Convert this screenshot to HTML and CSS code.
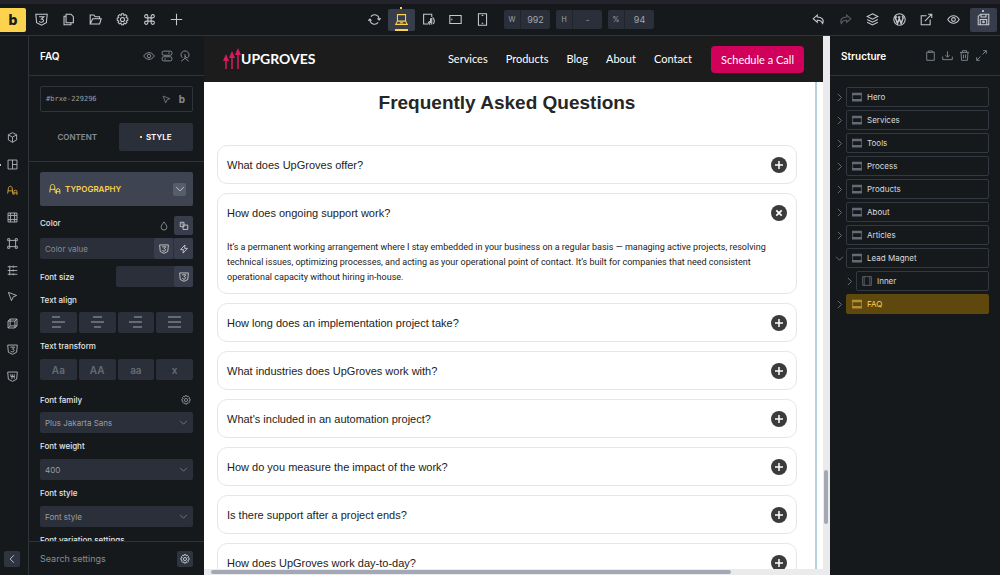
FILE: index.html
```html
<!DOCTYPE html>
<html lang="en">
<head>
  <meta charset="UTF-8">
  <title>Builder - FAQ</title>
  <meta name="viewport" content="width=device-width, initial-scale=1.0">
  <link rel="stylesheet" href="styles.css">
</head>
<body>
  <!-- Shared icons -->
  <svg class="sprite" aria-hidden="true">
    <symbol id="i-css" viewBox="0 0 16 16"><path d="M1 1.500h14l-1 10.500-6 3-6-3zM5 4.500h6L8 7.500c3.500 0 3 4 0 4-1.500 0-2.300-.5-2.700-1.500"/></symbol>
    <symbol id="i-css4" viewBox="0 0 16 16"><path d="M1 1.500h14l-1 10.500-6 3-6-3zM5.500 4.500V8h5M8 5l-1 6.500M10.500 5v6"/></symbol>
    <symbol id="i-pages" viewBox="0 0 16 16"><path d="M5 1.500h6l3 3V12H5zM5 4H2.500v10.500H11V12"/></symbol>
    <symbol id="i-folder" viewBox="0 0 16 16"><path d="M1.500 13.500v-11H6l1.500 2h5.500V7M1.500 13.500L4.500 7H15l-2 6.500z"/></symbol>
    <symbol id="i-gear" viewBox="0 0 16 16"><path d="M6.700 1h2.600l.5 2 1.800-1 1.900 1.900-1 1.800 2 .6v2.900l-2 .6 1 1.800-1.900 1.900-1.800-1-.5 2H6.700l-.5-2-1.800 1-1.900-1.900 1-1.800-2-.6V6.300l2-.6-1-1.800L4.400 2l1.800 1z"/><circle cx="8" cy="8" r="2.500"/></symbol>
    <symbol id="i-cmd" viewBox="0 0 16 16"><path d="M6 6h4v4H6zM6 6H4a2 2 0 1 1 2-2zM10 6V4a2 2 0 1 1 2 2zM10 10h2a2 2 0 1 1-2 2zM6 10v2a2 2 0 1 1-2-2z"/></symbol>
    <symbol id="i-plus" viewBox="0 0 16 16"><path d="M8 1v14M1 8h14"/></symbol>
    <symbol id="i-reload" viewBox="0 0 16 16"><path d="M3.500 4.500A5.700 5.700 0 0 1 13.700 8M12.500 11.500A5.700 5.700 0 0 1 2.300 8M.3 9.500L2.300 7.500l2 2M11.700 6.500l2 2 2-2"/></symbol>
    <symbol id="i-laptop" viewBox="0 0 16 16"><path d="M3 2h10v8H3zM3 10l-2 4h14l-2-4M6 12h4"/></symbol>
    <symbol id="i-tablet" viewBox="0 0 16 16"><path d="M12 5V1.500H2v12h6M10 14.500l-2-3 1-.8 1.500 1V7.500c0-1 1.500-1 1.500 0V14M13 5.500c2 1.500 2.500 5 1 8"/></symbol>
    <symbol id="i-wide" viewBox="0 0 16 16"><path d="M1 3h14v10H1zM3.500 7v2"/></symbol>
    <symbol id="i-phone" viewBox="0 0 16 16"><path d="M3 1h10v14H3zM7 12.500h2M7 3h2"/></symbol>
    <symbol id="i-undo" viewBox="0 0 16 16"><path d="M6.500 2.500L1.500 7l5 4.500V9c4-.3 5.500 1 6.500 4 2.500-4.500-1-8-6.500-8z"/></symbol>
    <symbol id="i-layers" viewBox="0 0 16 16"><path d="M8 1l6.500 3.300L8 7.600 1.500 4.300zM1.500 8L8 11.300 14.500 8M1.500 11.500L8 14.800l6.500-3.300"/></symbol>
    <symbol id="i-wp" viewBox="0 0 16 16"><circle cx="8" cy="8" r="7"/><path stroke-width="1.800" d="M2.500 5l3 8 2.300-6.500M7 5l3 8 2.500-7-1-2.500M2.500 5h2.500M6 5h3"/></symbol>
    <symbol id="i-open" viewBox="0 0 16 16"><path d="M8 3.500H1.500v11h11V8M6 10l8.500-8.500M10 1.500h4.500V6"/></symbol>
    <symbol id="i-eye" viewBox="0 0 16 16"><path d="M1 8c3.500-6 10.500-6 14 0-3.500 6-10.500 6-14 0z"/><circle cx="8" cy="8" r="2.300"/></symbol>
    <symbol id="i-save" viewBox="0 0 16 16"><path d="M1.500 14.500V4l3-2.500h10v13zM5 1.500V5h6V1.500M4 14V8h8v6"/><circle cx="8" cy="11" r="1"/></symbol>
    <symbol id="i-toggles" viewBox="0 0 16 16"><rect x="1.500" y="1.500" width="13" height="5.500" rx="2"/><rect x="1.500" y="9" width="13" height="5.500" rx="2"/><path d="M9.500 4h2M4.500 12h2"/></symbol>
    <symbol id="i-touch" viewBox="0 0 16 16"><path d="M4.500 10.500A5.300 5.300 0 1 1 11.500 10.500M8 5.500V11M8 8l3 3M3 15l5-4 5 4"/></symbol>
    <symbol id="i-cursor" viewBox="0 0 16 16"><path d="M2 2l12 4.500-5 2-2.500 5.500z"/></symbol>
    <symbol id="i-cube" viewBox="0 0 16 16"><path d="M8 1l6 3v7.500L8 15l-6-3.500V4zM2 4l6 3.500L14 4M8 7.500V15"/></symbol>
    <symbol id="i-layout" viewBox="0 0 16 16"><path d="M1.500 1.500h13v13h-13zM8 1.500v13M8 8h6.500"/></symbol>
    <symbol id="i-type" viewBox="0 0 16 16"><path d="M1 12.500L2 4.500C2.500 1 7 1 7.500 4.500L8.500 13.500M1.500 8.500H8M10 14.500V9.500c0-2.600 4.500-2.600 4.500 0v5M10 11.500h4.500"/></symbol>
    <symbol id="i-frame" viewBox="0 0 16 16"><path d="M1.500 1.500h13v13h-13zM5 5h6v6H5zM5 1.500V5M11 1.500V5M5 11v3.500M11 11v3.500M1.500 5H5M1.500 11H5M11 5h3.500M11 11h3.500"/></symbol>
    <symbol id="i-border" viewBox="0 0 16 16"><path d="M3.500 3.500h9v9h-9zM1 1h3v3H1zM12 1h3v3h-3zM1 12h3v3H1zM12 12h3v3h-3z"/></symbol>
    <symbol id="i-lines" viewBox="0 0 16 16"><path d="M1 2.500h14M1 8h14M1 13.500h14M4 1v14M9 1v3M9 6.500v3M9 12v3"/></symbol>
    <symbol id="i-box3d" viewBox="0 0 16 16"><path d="M1.500 4.500h10V14.500h-10zM4.500 1.500h10v10h-10zM1.500 4.500l3-3M11.500 4.500l3-3M1.500 14.500l3-3M11.500 14.500l3-3"/></symbol>
    <symbol id="i-drop" viewBox="0 0 16 16"><path d="M8 1.500c3 4 4.500 6 4.500 8.500a4.500 4.500 0 0 1-9 0C3.500 7.500 5 5.500 8 1.500z"/></symbol>
    <symbol id="i-palette" viewBox="0 0 16 16"><path d="M2 2h6v7H2zM5.500 6.500H14v7H6.500V9M4 4.500h2"/></symbol>
    <symbol id="i-bolt" viewBox="0 0 16 16"><path d="M9.500 1.500L2.500 9H7l-.5 5.500L13.500 7H9z"/></symbol>
    <symbol id="i-down" viewBox="0 0 16 16"><path d="M2 5l6 6 6-6"/></symbol>
    <symbol id="i-right" viewBox="0 0 16 16"><path d="M5 1.500L11.500 8 5 14.500"/></symbol>
    <symbol id="i-left" viewBox="0 0 16 16"><path d="M11 2L5 8l6 6"/></symbol>
    <symbol id="i-clip" viewBox="0 0 16 16"><path d="M5 3H2.500v12h11V3H11M5 1.500h6v2H5z"/></symbol>
    <symbol id="i-import" viewBox="0 0 16 16"><path d="M8 2v8M5 7.500l3 3 3-3M1 9.500v4.500h14V9.500"/></symbol>
    <symbol id="i-trash" viewBox="0 0 16 16"><path d="M1.500 3.500h13M5 3.500V1h6v2.500M3 3.500l.7 11.500h8.600L13 3.500M6.500 6.500v5.500M9.500 6.500v5.500"/></symbol>
    <symbol id="i-expand" viewBox="0 0 16 16"><path d="M9.500 6.500L15 1M10.500 1H15v4.500M6.500 9.500L1 15M1 10.500V15h4.500"/></symbol>
    <symbol id="i-section" viewBox="0 0 16 16"><path fill="currentColor" stroke="none" d="M0 1h16v4H0zM0 11h16v4H0z"/><path d="M1 2v12M15 2v12"/></symbol>
    <symbol id="i-block" viewBox="0 0 16 16"><path d="M1 1h14v14H1zM3.500 1v14M12.500 1v14"/></symbol>
    <symbol id="i-add" viewBox="0 0 16 16"><circle cx="8" cy="8" r="8" fill="#3b3b3b" stroke="none"/><path stroke="#fff" stroke-width="1.500" d="M8 4v8M4 8h8"/></symbol>
    <symbol id="i-close" viewBox="0 0 16 16"><circle cx="8" cy="8" r="8" fill="#3b3b3b" stroke="none"/><path stroke="#fff" stroke-width="1.700" d="M5.300 5.300l5.400 5.400M10.700 5.300l-5.400 5.400"/></symbol>
  </svg>

  <header class="toolbar">
    <div class="tools">
      <button class="brand" aria-label="Builder">b</button>
      <button class="tool" aria-label="Styles"><svg><use href="#i-css"/></svg></button>
      <button class="tool" aria-label="Pages"><svg><use href="#i-pages"/></svg></button>
      <button class="tool" aria-label="Templates"><svg><use href="#i-folder"/></svg></button>
      <button class="tool" aria-label="Settings"><svg><use href="#i-gear"/></svg></button>
      <button class="tool" aria-label="Commands"><svg><use href="#i-cmd"/></svg></button>
      <button class="tool" aria-label="Add element"><svg><use href="#i-plus"/></svg></button>
    </div>
    <div class="tools tools-center">
      <button class="tool" aria-label="Reload"><svg><use href="#i-reload"/></svg></button>
      <button class="tool tool-active device" aria-label="Desktop"><svg><use href="#i-laptop"/></svg></button>
      <button class="tool" aria-label="Tablet"><svg><use href="#i-tablet"/></svg></button>
      <button class="tool" aria-label="Mobile landscape"><svg><use href="#i-wide"/></svg></button>
      <button class="tool" aria-label="Mobile portrait"><svg><use href="#i-phone"/></svg></button>
      <div class="sizes">
        <label class="size"><span>W</span><input type="text" value="992"></label>
        <label class="size"><span>H</span><input type="text" placeholder="-"></label>
        <label class="size"><span>%</span><input type="text" value="94"></label>
      </div>
    </div>
    <div class="tools tools-right">
      <button class="tool" aria-label="Undo"><svg><use href="#i-undo"/></svg></button>
      <button class="tool redo" aria-label="Redo"><svg><use href="#i-undo"/></svg></button>
      <button class="tool" aria-label="Structure"><svg><use href="#i-layers"/></svg></button>
      <button class="tool" aria-label="WordPress"><svg><use href="#i-wp"/></svg></button>
      <button class="tool" aria-label="Open page"><svg><use href="#i-open"/></svg></button>
      <button class="tool" aria-label="Preview"><svg><use href="#i-eye"/></svg></button>
      <button class="tool tool-active save" aria-label="Save"><svg><use href="#i-save"/></svg></button>
    </div>
  </header>

  <div class="workspace">
    <nav class="rail">
      <div class="rail-list">
        <button aria-label="Content"><svg><use href="#i-cube"/></svg></button>
        <button class="has-style" aria-label="Layout"><svg><use href="#i-layout"/></svg></button>
        <button class="current" aria-label="Typography"><svg><use href="#i-type"/></svg></button>
        <button aria-label="Background"><svg><use href="#i-frame"/></svg></button>
        <button aria-label="Border"><svg><use href="#i-border"/></svg></button>
        <button aria-label="Gradient"><svg><use href="#i-lines"/></svg></button>
        <button aria-label="Shapes"><svg><use href="#i-cursor"/></svg></button>
        <button aria-label="Transform"><svg><use href="#i-box3d"/></svg></button>
        <button aria-label="CSS"><svg><use href="#i-css"/></svg></button>
        <button aria-label="Attributes"><svg><use href="#i-css4"/></svg></button>
      </div>
      <button class="mini collapse" aria-label="Collapse"><svg><use href="#i-left"/></svg></button>
    </nav>

    <aside class="panel">
      <div class="panel-head">
        <h2>FAQ</h2>
        <button aria-label="Hide"><svg><use href="#i-eye"/></svg></button>
        <button aria-label="Conditions"><svg><use href="#i-toggles"/></svg></button>
        <button aria-label="Interactions"><svg><use href="#i-touch"/></svg></button>
      </div>
      <div class="panel-top">
        <div class="selector">
          <input type="text" value="#brxe-229296" aria-label="Element selector">
          <button aria-label="States"><svg><use href="#i-cursor"/></svg></button>
          <button class="b" aria-label="Classes">b</button>
        </div>
        <div class="tabs">
          <button>CONTENT</button>
          <button class="tab-active">STYLE</button>
        </div>
      </div>
      <div class="controls">
        <button class="group">
          <svg><use href="#i-type"/></svg>
          <span>TYPOGRAPHY</span>
          <i class="mini"><svg><use href="#i-down"/></svg></i>
        </button>

        <div class="label-row color-row">
          <label for="color">Color</label>
          <button class="plain" aria-label="Opacity"><svg><use href="#i-drop"/></svg></button>
          <button class="square" aria-label="Palette"><svg><use href="#i-palette"/></svg></button>
        </div>
        <div class="field color-field">
          <input id="color" type="text" placeholder="Color value">
          <button class="square" aria-label="Variables"><svg><use href="#i-css"/></svg></button>
          <button class="square" aria-label="Dynamic data"><svg><use href="#i-bolt"/></svg></button>
        </div>

        <div class="label-row inline-row">
          <label for="font-size">Font size</label>
          <div class="field short">
            <input id="font-size" type="text">
            <button class="square" aria-label="Size variables"><svg><use href="#i-css"/></svg></button>
          </div>
        </div>

        <div class="label-row">Text align</div>
        <div class="options">
          <button aria-label="Left"><svg viewBox="0 0 13 13"><path d="M0 1h8M0 6h13M0 11h9"/></svg></button>
          <button aria-label="Center"><svg viewBox="0 0 13 13"><path d="M2 1h9M0 6h13M3 11h7"/></svg></button>
          <button aria-label="Right"><svg viewBox="0 0 13 13"><path d="M5 1h8M0 6h13M4 11h9"/></svg></button>
          <button aria-label="Justify"><svg viewBox="0 0 13 13"><path d="M0 1h13M0 6h13M0 11h13"/></svg></button>
        </div>

        <div class="label-row">Text transform</div>
        <div class="options">
          <button>Aa</button>
          <button>AA</button>
          <button>aa</button>
          <button>x</button>
        </div>

        <div class="label-row family-row">
          <label for="family">Font family</label>
          <button class="plain" aria-label="Font settings"><svg><use href="#i-gear"/></svg></button>
        </div>
        <div class="select"><select id="family"><option>Plus Jakarta Sans</option></select><svg><use href="#i-down"/></svg></div>
        <div class="label-row"><label for="weight">Font weight</label></div>
        <div class="select"><select id="weight"><option>400</option></select><svg><use href="#i-down"/></svg></div>
        <div class="label-row"><label for="style">Font style</label></div>
        <div class="select"><select id="style"><option>Font style</option></select><svg><use href="#i-down"/></svg></div>
        <div class="label-row">Font variation settings</div>
      </div>
      <div class="panel-foot">
        <input type="text" placeholder="Search settings" aria-label="Search settings">
        <button class="mini" aria-label="Search options"><svg><use href="#i-gear"/></svg></button>
      </div>
    </aside>

    <main class="canvas">
      <div class="frame">
        <div class="page">
          <div class="site-head">
            <a class="site-logo" href="#">
              <svg viewBox="0 0 18 22"><path d="M3 10v11M9 8v13M15 4v17" stroke="#d81b60" stroke-width="1.500"/><path d="M0 13l3-7 3 7zM6 10l3-7 3 7zM12 7l3-7 3 7z" fill="#d81b60" stroke="none"/></svg>
              <span>UPGROVES</span>
            </a>
            <nav class="site-nav">
              <a href="#">Services</a>
              <a href="#">Products</a>
              <a href="#">Blog</a>
              <a href="#">About</a>
              <a href="#">Contact</a>
            </nav>
            <a class="cta" href="#">Schedule a Call</a>
          </div>
          <section class="faq">
            <h1>Frequently Asked Questions</h1>
            <details><summary>What does UpGroves offer?<svg><use href="#i-add"/></svg></summary></details>
            <details open>
              <summary>How does ongoing support work?<svg><use href="#i-close"/></svg></summary>
              <p>It’s a permanent working arrangement where I stay embedded in your business on a regular basis — managing active projects, resolving technical issues, optimizing processes, and acting as your operational point of contact. It’s built for companies that need consistent operational capacity without hiring in-house.</p>
            </details>
            <details><summary>How long does an implementation project take?<svg><use href="#i-add"/></svg></summary></details>
            <details><summary>What industries does UpGroves work with?<svg><use href="#i-add"/></svg></summary></details>
            <details><summary>What's included in an automation project?<svg><use href="#i-add"/></svg></summary></details>
            <details><summary>How do you measure the impact of the work?<svg><use href="#i-add"/></svg></summary></details>
            <details><summary>Is there support after a project ends?<svg><use href="#i-add"/></svg></summary></details>
            <details><summary>How does UpGroves work day-to-day?<svg><use href="#i-add"/></svg></summary></details>
          </section>
        </div>
        <div class="scroll-y"><div class="thumb"></div></div>
      </div>
      <div class="scroll-x"><div class="thumb"></div></div>
    </main>

    <aside class="structure">
      <div class="structure-head">
        <h2>Structure</h2>
        <button aria-label="Paste"><svg><use href="#i-clip"/></svg></button>
        <button aria-label="Import"><svg><use href="#i-import"/></svg></button>
        <button aria-label="Delete"><svg><use href="#i-trash"/></svg></button>
        <button aria-label="Expand"><svg><use href="#i-expand"/></svg></button>
      </div>
      <ul class="tree">
        <li><svg class="arrow"><use href="#i-right"/></svg><button><svg><use href="#i-section"/></svg>Hero</button></li>
        <li><svg class="arrow"><use href="#i-right"/></svg><button><svg><use href="#i-section"/></svg>Services</button></li>
        <li><svg class="arrow"><use href="#i-right"/></svg><button><svg><use href="#i-section"/></svg>Tools</button></li>
        <li><svg class="arrow"><use href="#i-right"/></svg><button><svg><use href="#i-section"/></svg>Process</button></li>
        <li><svg class="arrow"><use href="#i-right"/></svg><button><svg><use href="#i-section"/></svg>Products</button></li>
        <li><svg class="arrow"><use href="#i-right"/></svg><button><svg><use href="#i-section"/></svg>About</button></li>
        <li><svg class="arrow"><use href="#i-right"/></svg><button><svg><use href="#i-section"/></svg>Articles</button></li>
        <li><svg class="arrow"><use href="#i-down"/></svg><button><svg><use href="#i-section"/></svg>Lead Magnet</button></li>
        <li class="child"><svg class="arrow"><use href="#i-right"/></svg><button><svg><use href="#i-block"/></svg>Inner</button></li>
        <li class="selected"><svg class="arrow"><use href="#i-right"/></svg><button><svg><use href="#i-section"/></svg>FAQ</button></li>
      </ul>
    </aside>
  </div>
</body>
</html>
```
FILE: styles.css
```css
* { box-sizing: border-box; }
html, body { height: 100%; }
body { margin: 0; display: flex; flex-direction: column; overflow: hidden; background: #16191c; color: #d9dbde; font-family: Inter, sans-serif; font-size: 8px; line-height: 12px; }
button, input, select { font: inherit; color: inherit; background: none; border: 0; padding: 0; margin: 0; min-width: 0; }
button { cursor: pointer; }
input:focus { outline: none; }
svg { fill: none; stroke: currentColor; stroke-width: 1.3; width: 12px; height: 12px; display: block; flex: none; }
.sprite { position: absolute; width: 0; height: 0; }
h1, h2, p, ul { margin: 0; padding: 0; }

/* Top toolbar */
.toolbar { display: flex; justify-content: space-between; align-items: center; flex: none; height: 36px; border-top: 4px solid #24232c; border-bottom: 1px solid #30343a; }
.tools { display: flex; align-items: center; }
.brand { width: 26px; height: 24px; margin-right: 2px; border-radius: 0 2px 2px 0; background: #fdd34d; color: #16191c; font-size: 14px; font-weight: 800; }
.tool { width: 27px; height: 24px; display: flex; align-items: center; justify-content: center; color: #c5c9cf; position: relative; }
.tool svg { width: 13px; height: 13px; }
.tool-active { background: #373d4a; border-radius: 2px; }
.tools-center { margin-left: 20px; }
.device { color: #fdd34d; height: 22px; }
.device::before, .save::before { content: ""; position: absolute; top: -2px; left: 12px; width: 2px; height: 2px; background: #fdd34d; }
.device::after { content: ""; position: absolute; bottom: 0; left: 7px; width: 13px; height: 2px; background: #fdd34d; }
.save::before { top: 2px; background: #b5b9bf; }
.sizes { display: flex; gap: 6px; margin-left: 8px; }
.size { display: flex; align-items: center; width: 46px; height: 19px; background: #2a2f39; border-radius: 2px; color: #a0a5ae; font-size: 7px; }
.size span { width: 17px; text-align: center; border-right: 1px solid #20242b; line-height: 19px; }
.size input { flex: 1; text-align: center; font-size: 9px; }
.redo { color: #5b6067; }
.redo svg { transform: scaleX(-1); }
.tools-right .save { margin-left: 3px; margin-right: 3px; }

.workspace { display: flex; flex: 1; min-height: 0; }

/* Icon rail */
.rail { width: 29px; flex: none; border-right: 1px solid #30343a; display: flex; flex-direction: column; justify-content: space-between; padding: 96px 4px 8px; }
.rail-list { display: flex; flex-direction: column; justify-content: space-between; height: 250px; }
.rail-list button { width: 16px; display: flex; justify-content: center; color: #b5b9bf; position: relative; }
.rail-list svg { width: 11px; height: 11px; }
.rail-list .current { color: #d9ab43; }
.has-style::before { content: ""; position: absolute; left: -5px; top: 5px; width: 2px; height: 2px; background: #fff; border-radius: 1px; }
.mini { width: 16px; height: 16px; display: flex; align-items: center; justify-content: center; background: #2f3540; border-radius: 2px; color: #d9dbde; }
.mini svg { width: 10px; height: 10px; }

/* Settings panel */
.panel { width: 175px; flex: none; display: flex; flex-direction: column; }
.panel-head, .structure-head { display: flex; align-items: center; height: 40px; flex: none; border-bottom: 1px solid #30343a; padding: 0 13px 0 11px; color: #868c96; }
.panel-head { gap: 6px; }
.panel h2, .structure h2 { flex: 1; color: #fff; font-size: 10px; font-weight: 600; }
.panel-head svg { width: 12px; height: 12px; }
.panel-top { padding: 10px 11px; border-bottom: 1px solid #30343a; }
.selector { display: flex; align-items: center; height: 26px; border: 1px solid #30343a; border-radius: 2px; padding: 0 7px 0 5px; color: #868c96; }
.selector input { flex: 1; font-family: "DejaVu Sans Mono", monospace; font-size: 7px; color: #9a9fa6; }
.selector svg { width: 9px; height: 9px; }
.selector .b { margin-left: 8px; font-size: 10px; font-weight: 700; }
.tabs { display: flex; gap: 4px; margin-top: 11px; }
.tabs button { flex: 1; height: 28px; border-radius: 2px; color: #868c96; font-weight: 600; }
.tabs .tab-active { background: #2a2f39; color: #fff; }
.tab-active::before { content: ""; display: inline-block; width: 2px; height: 2px; margin: 0 4px 2px 0; background: #fdd34d; }
.controls { flex: 1; min-height: 0; overflow: hidden; padding: 10px 11px 0; }
.group { display: flex; align-items: center; gap: 4px; width: 100%; height: 34px; padding: 0 7px 0 9px; border-radius: 2px; background: #3e4451; color: #fdd34d; font-weight: 600; text-align: left; }
.group span { flex: 1; }
.group .mini { background: #565e6d; width: 13px; height: 13px; }
.label-row { display: flex; align-items: center; height: 26px; color: #e3e5e8; font-weight: 500; }
.label-row label { flex: 1; }
.color-row { height: 32px; align-items: flex-end; padding-bottom: 3px; }
.color-row label { margin-bottom: 6px; }
.color-row .plain { margin-bottom: 4px; }
.plain { color: #9a9fa6; margin-right: 5px; }
.plain svg { width: 10px; height: 10px; }
.square { width: 19px; height: 100%; display: flex; align-items: center; justify-content: center; background: #373d4a; border-radius: 2px; color: #d9dbde; }
.square svg { width: 10px; height: 10px; }
.color-row .square { height: 19px; }
.field { display: flex; gap: 1px; height: 21px; background: #2a2f39; border-radius: 2px; }
.field input { flex: 1; padding-left: 5px; font-weight: 400; }
input::placeholder { color: #868c96; opacity: 1; }
.inline-row { height: 35px; }
.short { flex: none; width: 77px; }
.inline-row + .label-row { height: 18px; padding-bottom: 6px; }
.options { display: grid; grid-template-columns: repeat(4, 1fr); gap: 2px; height: 21px; }
.options button { display: flex; align-items: center; justify-content: center; background: #2a2f39; border-radius: 2px; color: #656b76; font-size: 10px; font-weight: 600; }
.options svg { width: 13px; height: 13px; stroke-width: 2; }
.family-row { height: 32px; padding-top: 7px; }
.family-row .plain { margin-right: 2px; }
.select { position: relative; }
.select select { appearance: none; width: 100%; height: 21px; padding-left: 5px; background: #2a2f39; border-radius: 2px; color: #9a9fa6; display: block; }
.select svg { position: absolute; right: 5px; top: 6px; width: 9px; height: 9px; color: #868c96; }
.panel-foot { display: flex; align-items: center; justify-content: space-between; flex: none; height: 34px; padding: 0 11px; border-top: 1px solid #30343a; font-size: 9px; }
.panel-foot input { flex: 1; }

/* Page preview */
.canvas { flex: 1; min-width: 0; display: flex; flex-direction: column; background: #fff; color: #222; }
.frame { flex: 1; min-height: 0; display: flex; }
.page { flex: 1; min-width: 0; overflow: hidden; display: flex; flex-direction: column; }
.site-head { display: flex; align-items: center; flex: none; height: 46px; padding: 0 19px; background: #1c1c1c; color: #fff; font-family: Lato, sans-serif; font-size: 11px; }
.site-head a { color: inherit; text-decoration: none; }
.site-logo { display: flex; align-items: center; font-size: 14px; font-weight: 700; margin-right: auto; }
.site-logo svg { width: 18px; height: 22px; }
.site-nav { display: flex; gap: 18px; }
.cta { margin-left: 19px; padding: 0 10px; line-height: 27px; border-radius: 4px; background: #d1005b; }
.faq { flex: 1; min-height: 0; margin-right: 6px; padding: 7px 18px 0 13px; border-right: 2px solid #b5d3df; display: flex; flex-direction: column; gap: 9px; }
.faq h1 { font-family: "Liberation Sans", sans-serif; font-size: 19px; line-height: 28px; text-align: center; margin-bottom: 19px; color: #262626; }
.faq details { flex: none; border: 1px solid #e6e6e6; border-radius: 10px; padding: 0 9px; }
.faq summary { display: flex; align-items: center; justify-content: space-between; height: 37px; list-style: none; cursor: pointer; font-family: "Liberation Sans", sans-serif; font-size: 11px; }
.faq summary svg { width: 16px; height: 16px; }
.faq p { padding: 9px 0 8px; font-family: Roboto, sans-serif; font-size: 9px; line-height: 15px; }
.scroll-y { width: 7px; flex: none; background: #ebebed; display: flex; flex-direction: column; justify-content: flex-end; padding: 0 2px 45px 1px; }
.scroll-y .thumb { height: 11%; background: #a3a9b4; border-radius: 2px; }
.scroll-x { flex: none; height: 6px; background: #ebebed; padding: 1px 7px; }
.scroll-x .thumb { width: 85%; height: 4px; background: #a3a9b4; border-radius: 2px; }

/* Structure panel */
.structure { width: 170px; flex: none; }
.structure-head { gap: 6px; }
.structure-head svg { width: 11px; height: 11px; }
.tree { list-style: none; padding: 11px 11px 0 5px; display: flex; flex-direction: column; gap: 3px; }
.tree li { display: flex; align-items: center; gap: 2px; }
.tree .arrow { width: 9px; height: 9px; color: #868c96; }
.tree button { flex: 1; display: flex; align-items: center; gap: 5px; height: 20px; padding-left: 5px; border: 1px solid #343840; border-radius: 2px; }
.tree button svg { width: 10px; height: 10px; color: #656b76; }
.tree .child { padding-left: 10px; }
.tree .selected button { background: #5e480e; border-color: #5e480e; color: #fdd34d; }
.tree .selected button svg { color: #b08e34; }
```
